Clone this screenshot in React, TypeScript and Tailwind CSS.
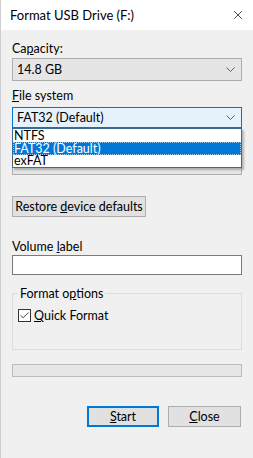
import { Check, X } from "lucide-react";

function Chevron() {
  return (
    <svg width="9" height="5" viewBox="0 0 9 5" className="shrink-0">
      <path d="M0.5 0.5 L4.5 4.5 L8.5 0.5" fill="none" stroke="#606060" strokeWidth="1" />
    </svg>
  );
}

function Combo({ value, active }: { value: string; active?: boolean }) {
  return (
    <div
      className={
        active
          ? "flex h-[21px] items-center justify-between border border-[#0078d7] bg-[#e5f1fb] pl-[4px] pr-[6px]"
          : "flex h-[23px] items-center justify-between border border-[#adadad] bg-[#e5e5e5] pl-[4px] pr-[6px]"
      }
    >
      <span>{value}</span>
      <Chevron />
    </div>
  );
}

export default function App() {
  return (
    <div
      className="w-[253px] h-[458px] bg-[#f0f0f0] text-[12.5px] leading-[15px] text-black border-l border-[#cfcfcf]"
      style={{ fontFamily: 'Lato, "Noto Sans", sans-serif' }}
    >
      {/* title bar */}
      <div className="flex h-[30px] items-center justify-between bg-white pl-[9px] pr-[8px]">
        <span className="text-[13px]">Format USB Drive (F:)</span>
        <X size={14} strokeWidth={1.2} className="text-black" />
      </div>

      <div className="flex flex-col px-[11px]">
        <div className="mt-[11px]">
          Ca<u>p</u>acity:
        </div>
        <div className="mt-[2px]">
          <Combo value="14.8 GB" />
        </div>

        <div className="mt-[7px]">
          <u>F</u>ile system
        </div>
        <div className="relative mt-[4px]">
          <Combo value="FAT32 (Default)" active />
          {/* open dropdown list, covers the allocation unit size row */}
          <div className="absolute left-0 right-0 top-full z-10 flex flex-col border border-[#3c6b93] bg-white shadow-[2px_2px_2px_rgba(0,0,0,0.25)]">
            <div className="h-[13px] pl-[1px] leading-[13px]">NTFS</div>
            <div className="h-[13px] bg-[#0078d7] pl-[1px] leading-[13px] text-white outline outline-1 outline-dotted outline-[#9ccaf0] -outline-offset-1">
              FAT32 (Default)
            </div>
            <div className="h-[12px] pl-[1px] leading-[12px]">exFAT</div>
          </div>
        </div>

        {/* hidden row under the list */}
        <div className="mt-[7px] h-[15px]" />
        <div className="mt-[2px] h-[23px] border border-[#adadad] bg-[#e5e5e5]" />

        <div className="mt-[21px] flex">
          <div className="flex h-[21px] w-[134px] items-center justify-center border border-[#adadad] bg-[#e1e1e1]">
            <span>
              Restore <u>d</u>evice defaults
            </span>
          </div>
        </div>

        <div className="mt-[22px]">
          Volume <u>l</u>abel
        </div>
        <div className="mt-[1px] h-[20px] border border-[#7a7a7a] bg-white" />

        <fieldset className="mt-[11px] h-[64px] border border-[#dcdcdc] px-[5px]">
          <legend className="px-[2px]">
            Format o<u>p</u>tions
          </legend>
          <div className="mt-[7px] flex items-center gap-[3px]">
            <div className="flex h-[13px] w-[13px] items-center justify-center border border-[#333333] bg-white">
              <Check size={11} strokeWidth={1.6} />
            </div>
            <span>
              <u>Q</u>uick Format
            </span>
          </div>
        </fieldset>

        <div className="mt-[14px] h-[13px] border border-[#bcbcbc] bg-[#e6e6e6]" />

        <div className="mt-[29px] flex justify-end gap-[9px] pr-[1px]">
          <div className="flex h-[21px] w-[72px] items-center justify-center border-2 border-[#0078d7] bg-[#e1e1e1]">
            <span>
              <u>S</u>tart
            </span>
          </div>
          <div className="flex h-[21px] w-[73px] items-center justify-center border border-[#adadad] bg-[#e1e1e1]">
            <span>
              <u>C</u>lose
            </span>
          </div>
        </div>
      </div>
    </div>
  );
}
